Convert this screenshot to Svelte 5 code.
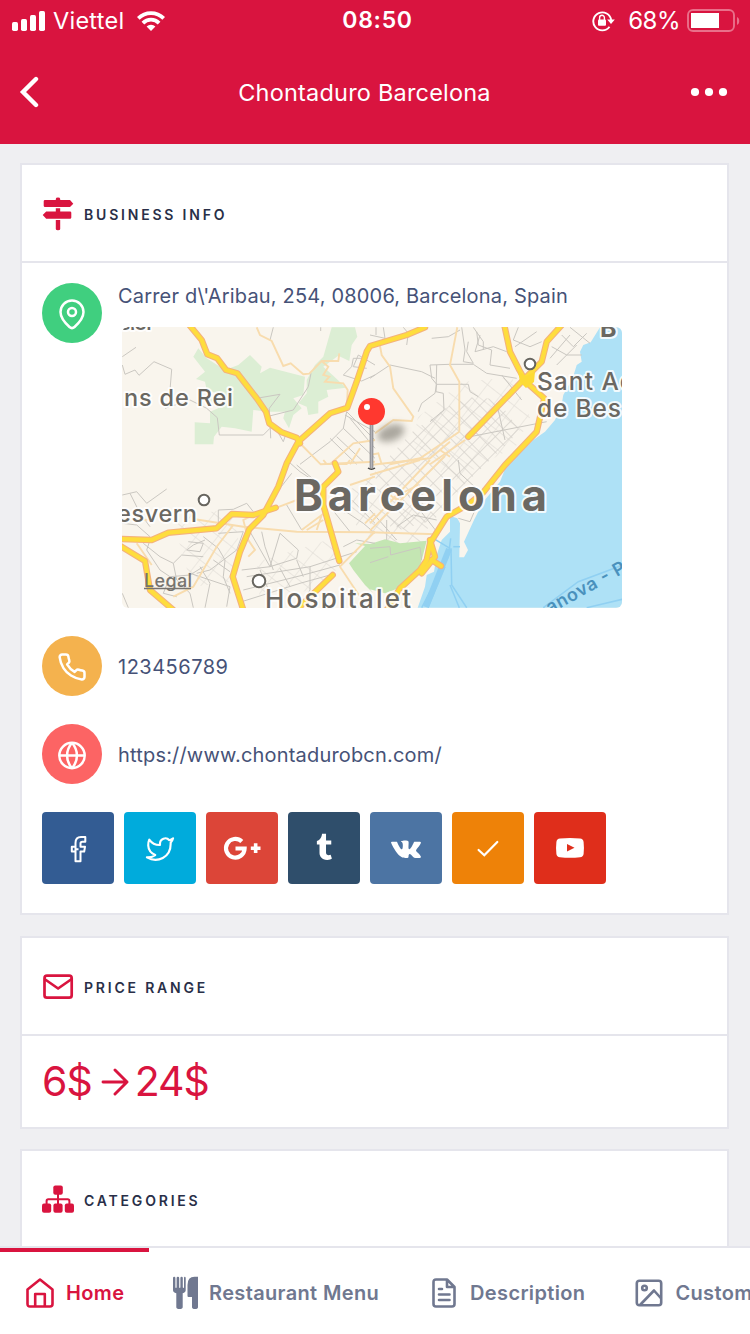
<script>
  // Map geometry is kept in four 3x tiles; each tile is projected to map pixels.
  const tiles = { a: [-12, -12], b: [248, -12], c: [-12, 133], d: [248, 133] };
  const project = (src) =>
    src
      .split(';')
      .map((part) => {
        const [tile, ...pts] = part.trim().split(/\s+/);
        const [ox, oy] = tiles[tile];
        return pts
          .map((p) => {
            const [x, y] = p.split(',').map(Number);
            return (ox + x / 3).toFixed(1) + ',' + (oy + y / 3).toFixed(1);
          })
          .join(' ');
      })
      .join(' ');

  const water = project(
    'b 757,37 690,37 662,82 640,90 630,110 635,140 620,150 608,190 580,240 575,268 555,315 525,350 490,375 435,430 405,462;d 390,65 340,125 312,180 282,245 294,270 282,292 268,292 270,190 262,175 240,168 240,215 215,240 200,285 192,335 170,345 165,380 143,443 757,443'
  );
  const parks = [
    'a 265,100 290,130 345,165 385,150 420,120 455,155 450,175 480,158 585,185 580,240 550,250 575,280 550,300 537,340 520,310 525,290 470,290 430,285 425,350 375,340 335,335 312,365 310,388 254,388 254,322 300,325 300,290 325,280 310,265 290,250 320,235 290,225 285,200 258,192 285,170 250,125',
    'a 665,37 735,37 742,65 725,90 718,138 685,122 640,155 670,182 708,218 650,225 655,245 625,260 625,295 595,300 590,275 565,265 590,235 590,195 615,150 640,125'
  ].map(project);
  const hill = project('d -45,250 0,252 45,238 90,250 170,242 150,320 85,385 45,400 0,388;c 790,400 765,375 730,330 717,310 765,258');
  const harbour = ['d 242,235 235,290 155,443', 'd 243,265 245,375 290,443', 'd 195,238 240,265', 'd 225,320 175,440', 'd 240,375 268,443', 'd 250,260 270,260', 'd 520,443 625,365 757,316', 'd 650,443 757,418'].map(project);

  const streets = [
    'a 37,150 45,178 75,165 87,181 132,140 185,163 180,225',
    'a 37,125 78,97', 'a 165,280 240,255 290,280 322,308 328,360 460,360 480,340',
    'a 490,37 480,75', 'a 440,250 510,238 478,280 480,320 482,370', 'a 632,37 632,48',
    'a 603,175 595,215 550,285 470,305', 'a 500,345 520,380 530,350',
    'a 760,130 730,130 725,155 700,180 755,198 795,180', 'a 795,150 745,120 730,155 770,160',
    'a 710,290 700,340 660,380 570,448', 'a 705,300 795,350', 'a 710,290 795,375', 'a 720,310 795,400', 'a 660,370 740,448', 'a 680,365 760,440', 'a 700,340 795,430',
    'b 0,60 45,70 40,37', 'b 18,37 18,60', 'b 100,37 115,55 110,90', 'b 0,190 60,150 155,170 195,190', 'b 240,148 180,150 185,190 200,208 195,235 155,265 145,290', 'b 200,150 198,230 220,235 222,285 180,320',
    'b 200,208 295,208 300,230 325,245', 'b 275,37 285,105 280,140 310,145 290,110 295,80', 'b 185,70 235,65 270,45', 'b 320,50 325,90 365,105 360,150 420,160', 'b 330,60 315,110 370,95 410,110', 'b 240,148 310,148 350,175 440,190',
    'b 310,37 340,80 340,105', 'b 445,37 430,75 480,95 515,80', 'b 545,95 590,120 635,120', 'b 575,60 610,95 650,55', 'b 600,37 660,85', 'b 540,130 600,60', 'b 560,150 620,90', 'b 500,50 435,95', 'b 300,365 530,320', 'b 380,265 405,375', 'b 395,180 455,255',
    'c 37,105 80,95 110,130 170,87', 'c 37,190 80,195 120,230', 'c 60,100 90,160 120,200', 'c 325,205 325,150 370,148 410,130 430,155', 'c 100,250 150,290 190,310 215,285 280,290', 'c 120,240 110,270 150,330 180,350 240,345 280,320', 'c 190,310 200,360 240,400 250,443',
    'c 235,245 280,250 270,275 230,270 250,255 285,240', 'c 280,230 325,265 345,300 340,350 360,400', 'c 325,220 400,215 380,270 300,330 260,340', 'c 180,350 160,400 200,410', 'c 240,340 360,380 350,440', 'c 270,320 300,370 285,443', 'c 310,300 360,335',
    'c 420,215 480,320 510,220 565,270 560,295 480,320 395,330', 'c 455,215 465,260 490,330', 'c 410,350 600,320 740,275', 'c 400,390 580,345 690,315', 'c 395,425 570,370 660,345', 'c 600,320 600,390 570,440', 'c 450,330 480,400', 'c 510,325 540,380', 'c 560,300 580,350', 'c 530,135 575,210', 'c 530,0 570,35 640,80', 'c 545,40 510,85', 'c 560,15 630,75', 'c 700,260 740,240 795,250', 'c 700,150 760,190 795,220', 'c 660,140 720,215', 'c 37,400 55,443', 'c 725,120 795,190',
    'd 0,265 60,260 62,285 150,262', 'd 0,308 55,290', 'd 150,262 155,300', 'd 50,180 50,240', 'd 0,150 80,240', 'd 265,0 270,40 330,95', 'd 265,175 300,185 315,150', 'd 110,100 200,215', 'd 80,200 130,165 200,180'
  ].map(project);
  const minor = [
    'a 440,37 450,60 485,78 520,153 542,145 580,178 598,176 635,138 685,138 688,115',
    'a 635,138 655,155 640,180 658,185 645,200 700,205 713,225 710,280',
    'a 575,390 632,448 795,440', 'a 660,448 730,385 795,375', 'a 720,448 750,400',
    'b 30,93 35,120 60,155 70,220 130,305 125,318 70,315 15,355', 'b 262,37 240,150 268,200 268,350', 'b 285,375 180,448', 'b 268,350 150,430 60,448', 'b 240,380 180,430 0,450', 'b 210,405 240,425', 'b 0,420 25,415 35,448',
    'c 255,178 400,200 560,215 795,217', 'c 37,178 130,180', 'c 500,143 600,105 640,95', 'c 370,195 320,260 250,380 190,410', 'c 795,215 690,320 760,425', 'c 430,165 400,180 415,240 435,270 415,290', 'c 575,210 635,165 620,210', 'c 765,190 795,160', 'c 80,250 125,315', 'c 640,0 650,12 710,12 720,0', 'c 720,75 795,50', 'c 590,210 640,180',
    'd 0,217 200,223', 'd 0,45 150,0', 'd 0,190 180,0', 'd 0,212 225,-12', 'd 60,105 100,135 75,110 145,75'
  ].map(project);
  const major = [
    'a 238,30 275,75 292,118 322,130 348,165 382,175 405,205 440,250 468,290 478,325 515,352 560,368 570,385',
    'b 165,37 110,60 50,78 0,93;a 770,110 740,200 712,278 660,295 565,380 530,445;c 505,80 460,165 418,208 390,275 368,350 400,450',
    'c 30,237 125,240 175,218 320,205 365,162 430,165 497,143',
    'c 30,257 105,303 120,390 190,450',
    'c 675,10 685,35 640,80 640,135 688,303',
    'c 668,345 590,420 560,450',
    'b 403,30 420,110 448,165 465,195', 'b 575,30 530,80 515,140 465,190', 'b 465,190 295,365',
    'b 465,198 523,250 500,350 405,450;d 340,97 300,130 230,170 180,250 170,300 150,330 90,385 50,450',
    'd 180,240 195,290 155,340', 'd 185,300 213,318'
  ].map(project);

  const socials = [
    { name: 'facebook', color: '#335c93' },
    { name: 'twitter', color: '#00abdc' },
    { name: 'google', color: '#dc4538' },
    { name: 'tumblr', color: '#2f4e6b' },
    { name: 'vk', color: '#4c74a3' },
    { name: 'check', color: '#ee8208' },
    { name: 'youtube', color: '#df2e1b' }
  ];
</script>

<div class="screen">
  <header>
    <div class="status">
      <div class="carrier">
        <svg width="34" height="20" viewBox="0 0 34 20" fill="#fff"><rect y="11" width="6" height="9" rx="1.7"/><rect x="9" y="8" width="6" height="12" rx="1.7"/><rect x="18" y="4" width="6" height="16" rx="1.7"/><rect x="27" width="6" height="20" rx="1.7"/></svg>
        <span class="operator">Viettel</span>
        <svg width="28" height="20" viewBox="0 0 28 20" fill="none" stroke="#fff" stroke-width="3.800"><path d="M1.300 7.400a18 18 0 0 1 25.400 0M5.900 12.100a11.400 11.400 0 0 1 16.200 0"/><path d="M14 20l-4.400-4.400a6.300 6.300 0 0 1 8.800 0z" fill="#fff" stroke="none"/></svg>
      </div>
      <div class="clock">08:50</div>
      <div class="power">
        <svg width="23" height="22" viewBox="0 0 23 22" fill="none" stroke="#fff" stroke-width="1.900"><path d="M17.500 16.800A9 9 0 1 1 19.200 10"/><path d="M15.200 9.500h7.600L19 14z" fill="#fff" stroke="none"/><rect x="6" y="9.500" width="8" height="6.200" rx="1" fill="#fff" stroke="none"/><path d="M7.600 10V7.700a2.400 2.400 0 0 1 4.800 0V10" stroke-width="1.400"/></svg>
        <span class="percent">68%</span>
        <svg width="54" height="24" viewBox="0 0 54 24"><rect x="1" y="1" width="46" height="21" rx="5" fill="none" stroke="#e9708a" stroke-width="1.900"/><rect x="4" y="4" width="28" height="15" fill="#fff"/><path d="M50 8c3 1.200 3 6.800 0 8z" fill="#e9708a"/></svg>
      </div>
    </div>
    <div class="titlebar">
      <svg width="20" height="32" viewBox="0 0 20 32" fill="none" stroke="#fff" stroke-width="4.400" stroke-linecap="round" stroke-linejoin="miter"><path d="M17 3L4 16l13 13"/></svg>
      <h1>Chontaduro Barcelona</h1>
      <svg width="38" height="10" viewBox="0 0 38 10" fill="#fff"><circle cx="5" cy="5" r="4.100"/><circle cx="19" cy="5" r="4.100"/><circle cx="33" cy="5" r="4.100"/></svg>
    </div>
  </header>

  <main>
    <section class="info">
      <div class="head">
        <svg width="32" height="34" viewBox="0 0 32 34" fill="#d9143f"><path d="M13.800 2q0-1.400 2.200-1.400T18.200 2v1H28l3.300 3.700L28 10H3q-1.300 0-1.300-1.300V4.300Q1.700 3 3 3h10.800zM13.800 11.200h4.400v3.300H28q1.300 0 1.300 1.300v4.600q0 1.300-1.300 1.300H4.200L.7 18l3.500-3.500h9.600zM13.800 22.900h4.400v9q0 1.300-2.200 1.300t-2.200-1.300z"/></svg>
        <h2>BUSINESS INFO</h2>
      </div>
      <div class="body">
        <div class="row address">
          <div class="dot green"><svg width="30" height="32" viewBox="0 0 30 32" fill="none" stroke="#fff" stroke-width="2.500"><path d="M15 2.500A11.500 11.500 0 0 0 3.500 14c0 5 3.500 10 9 15q2.500 2.200 5 0c5.500-5 9-10 9-15A11.500 11.500 0 0 0 15 2.500z"/><circle cx="15" cy="14" r="4"/></svg></div>
          <div class="place">
            <p>Carrer d\'Aribau, 254, 08006, Barcelona, Spain</p>
            <svg class="map" width="500" height="281" viewBox="0 0 500 281">
              <defs>
                <pattern id="blocks" width="11" height="11" patternUnits="userSpaceOnUse" patternTransform="rotate(45)"><path d="M0 0H11M0 0V11" stroke="#cbc8c2" stroke-width="1.500" fill="none"/></pattern>
                <pattern id="wide" width="17" height="15" patternUnits="userSpaceOnUse" patternTransform="rotate(38)"><path d="M0 0H17M0 0V15" stroke="#cfccc6" stroke-width="1.300" fill="none"/></pattern>
                <linearGradient id="pole"><stop stop-color="#808085"/><stop offset=".5" stop-color="#b5b5ba"/><stop offset="1" stop-color="#808085"/></linearGradient>
                <filter id="soft" x="-50%" y="-50%" width="200%" height="200%"><feGaussianBlur stdDeviation="3.500"/></filter>
              </defs>
              <rect width="500" height="281" fill="#f9f5ed"/>
              <polygon points={water} fill="#aee1f6"/>
              {#each parks as pts}<polygon points={pts} fill="#dceed4"/>{/each}
              <polygon points="252,146 290,105 340,70 375,72 398,104 340,160 312,193 270,205" fill="url(#blocks)" opacity=".75"/>
              <polygon points="296,90 340,55 390,50 408,90 395,118 330,155 290,120" fill="url(#wide)" opacity=".5"/>
              <polygon points="210,175 250,148 310,180 300,232 262,225" fill="url(#wide)" opacity=".7"/>
              <polygon points="50,190 110,182 118,220 108,255 70,260" fill="url(#wide)" opacity=".5"/>
              <polygon points="135,235 215,210 218,240 190,262 138,278" fill="url(#wide)" opacity=".5"/>
              <polygon points={hill} fill="#c4e6b3"/>
              <g fill="none" stroke="#cac7c1" stroke-width="1">{#each streets as pts}<polyline points={pts}/>{/each}</g>
              <g fill="none" stroke="#f8dcae" stroke-width="1.900">{#each minor as pts}<polyline points={pts}/>{/each}</g>
              <g fill="none" stroke="#90d0f2" stroke-width="1.500">{#each harbour as pts}<polyline points={pts}/>{/each}<path d="M327 222L304 280" stroke-width="6"/></g>
              <g fill="none" stroke="#f4b27c" stroke-width="6.400" stroke-linecap="round" stroke-linejoin="round">{#each major as pts}<polyline points={pts}/>{/each}</g>
              <g fill="none" stroke="#fedd3d" stroke-width="4.300" stroke-linecap="round" stroke-linejoin="round">{#each major as pts}<polyline points={pts}/>{/each}</g>
              <path d="M396 44l8 5 9-4-1 10-8 6-6-6z" fill="#fddb35"/>
              <g fill="#fff" stroke="#686660" stroke-width="2"><circle cx="408" cy="37" r="5.300"/><circle cx="82" cy="173" r="5.300"/><circle cx="137" cy="254" r="6.300"/></g>
              <g class="labels">
                <text x="-3" y="3.300" font-size="23" textLength="36">slor</text>
                <text x="2" y="79" font-size="23.500" textLength="109">ns de Rei</text>
                <text x="478" y="10" font-size="25" style="font-weight:700">B</text>
                <text x="415" y="63" font-size="24.500" textLength="98">Sant Ad</text>
                <text x="415" y="89.500" font-size="24.500" textLength="84">de Bes</text>
                <text x="-5" y="194.500" font-size="23.500" textLength="80">esvern</text>
                <text x="143" y="280.500" font-size="26" textLength="146">Hospitalet</text>
                <text class="city" x="172" y="184" font-size="43.500" textLength="253">Barcelona</text>
              </g>
              <text class="sea" x="428" y="287" transform="rotate(-29 428 287)" textLength="88">anova - P</text>
              <text class="legal" x="22" y="260" textLength="48">Legal</text>
              <path d="M22 261.500H69" stroke="#77746f" stroke-width="1.700"/>
              <ellipse cx="269" cy="106" rx="14" ry="8" transform="rotate(-20 269 106)" fill="#77736a" opacity=".6" filter="url(#soft)"/>
              <path d="M246 141q3.500 2.500 7 0" stroke="#444" stroke-width="1.500" fill="none"/>
              <rect x="247.700" y="95" width="3.600" height="46" fill="url(#pole)"/>
              <circle cx="249.500" cy="84.500" r="13.500" fill="#ff382f"/><circle cx="245" cy="80" r="3" fill="#fff"/>
            </svg>
          </div>
        </div>
        <div class="row">
          <div class="dot amber"><svg width="30" height="30" viewBox="0 0 24 24" fill="none" stroke="#fff" stroke-width="2" stroke-linejoin="round"><path d="M22 16.920v3a2 2 0 0 1-2.180 2 19.790 19.790 0 0 1-8.630-3.070 19.500 19.500 0 0 1-6-6 19.790 19.790 0 0 1-3.070-8.670A2 2 0 0 1 4.110 2h3a2 2 0 0 1 2 1.720 12.840 12.840 0 0 0 .7 2.810 2 2 0 0 1-.45 2.110L8.090 9.910a16 16 0 0 0 6 6l1.270-1.270a2 2 0 0 1 2.110-.45 12.840 12.840 0 0 0 2.810.7A2 2 0 0 1 22 16.920z"/></svg></div>
          <p class="phone">123456789</p>
        </div>
        <div class="row">
          <div class="dot coral"><svg width="30" height="30" viewBox="0 0 30 30" fill="none" stroke="#fff" stroke-width="2.500"><circle cx="15" cy="15.500" r="12.700"/><path d="M2.300 15.500h25.400M15 2.800c6.600 7.800 6.600 17.600 0 25.400M15 2.800c-6.600 7.800-6.600 17.600 0 25.400"/></svg></div>
          <p>https://www.chontadurobcn.com/</p>
        </div>
        <div class="socials">
          {#each socials as s}
            <div class="social" style="background:{s.color}">
              <svg width="72" height="72" viewBox="0 0 72 72">
                {#if s.name === 'facebook'}
                  <path d="M43.300 25h-4.300q-5.500 0-5.500 6v3.800H29.800v4.700h3.700v9.700h5v-9.700h3.700l.8-4.700h-4.500v-3.300q0-1.700 1.900-1.700h2.900zM33.500 34.800v5M33.500 37.200h3" fill="none" stroke="#fff" stroke-width="2" stroke-linejoin="round"/>
                {:else if s.name === 'twitter'}
                  <path transform="translate(21.700 22.800) scale(1.190)" d="M23 3a10.900 10.900 0 0 1-3.140 1.530 4.480 4.480 0 0 0-7.860 3v1A10.660 10.660 0 0 1 3 4s-4 9 5 13a11.640 11.640 0 0 1-7 2c9 5 20 0 20-11.500a4.500 4.500 0 0 0-.08-.83A7.720 7.720 0 0 0 23 3z" fill="none" stroke="#fff" stroke-width="1.800" stroke-linejoin="round"/>
                {:else if s.name === 'google'}
                  <path d="M35.800 29.600A9.300 9.300 0 1 0 38.600 36.500H29.500" fill="none" stroke="#fff" stroke-width="4.200"/><path d="M44.800 36.200h9.700M49.650 31.300v9.800" fill="none" stroke="#fff" stroke-width="3.600"/>
                {:else if s.name === 'tumblr'}
                  <path transform="translate(23.300 21.800) scale(1.090)" d="M14.563 24c-5.093 0-7.031-3.756-7.031-6.411V9.747H5.116V6.648c3.630-1.313 4.512-4.596 4.710-6.469C9.840.051 9.941 0 9.999 0h3.517v6.114h4.801v3.633h-4.820v7.470c.016 1.001.375 2.371 2.207 2.371h.090c.631-.020 1.486-.205 1.936-.419l1.156 3.425c-.436.636-2.400 1.374-4.156 1.404h-.178z" fill="#fff"/>
                {:else if s.name === 'vk'}
                  <path transform="translate(21 22.200) scale(1.250)" d="M13.162 18.994c.609 0 .858-.406.851-.915-.031-1.917.714-2.949 2.059-1.604 1.488 1.488 1.796 2.519 3.603 2.519h3.200c.808 0 1.126-.260 1.126-.668 0-.863-1.421-2.386-2.625-3.504-1.686-1.565-1.765-1.602-.313-3.486 1.801-2.339 4.157-5.336 2.073-5.336h-3.981c-.772 0-.828.435-1.103 1.083-.995 2.347-2.886 5.387-3.604 4.922-.751-.485-.407-2.406-.350-5.261.015-.754.011-1.271-1.141-1.539-.629-.145-1.241-.205-1.809-.205-2.273 0-3.841.953-2.950 1.119 1.571.293 1.420 3.692 1.054 5.160-.638 2.556-3.036-2.024-4.035-4.305-.241-.548-.315-.974-1.175-.974h-3.255c-.492 0-.787.160-.787.516 0 .602 2.960 6.720 5.786 9.770 2.756 2.975 5.480 2.708 7.376 2.708z" fill="#fff"/>
                {:else if s.name === 'check'}
                  <path d="M26.600 38l5.700 5.300L45.300 30" fill="none" stroke="#fff" stroke-width="2.200" stroke-linecap="round"/>
                {:else}
                  <path d="M26 26.500q10-1 20 0 3.200.3 3.600 3.500.7 6 0 12-.4 3-3.600 3.300-10 1-20 0-3.200-.3-3.600-3.300-.7-6 0-12 .400-3.200 3.600-3.500z" fill="#fff"/><path d="M33 32v7.600l7.500-3.800z" fill="#df2e1b"/>
                {/if}
              </svg>
            </div>
          {/each}
        </div>
      </div>
    </section>

    <section class="price">
      <div class="head">
        <svg width="32" height="34" viewBox="0 0 32 34" fill="none" stroke="#d9143f" stroke-width="2.700" stroke-linejoin="round"><rect x="2.500" y="5.700" width="27.200" height="22" rx="2.500"/><path d="M2.500 9l13.600 9.500L29.700 9"/></svg>
        <h2>PRICE RANGE</h2>
      </div>
      <div class="range">
        <span>6$</span>
        <svg width="28" height="28" viewBox="0 0 28 28" fill="none" stroke="#d9143f" stroke-width="2.900" stroke-linecap="round" stroke-linejoin="round"><path d="M2 14h24M14 2l12 12-12 12"/></svg>
        <span>24$</span>
      </div>
    </section>

    <section>
      <div class="head">
        <svg width="32" height="34" viewBox="0 0 32 34" fill="#d9143f"><rect x="11.300" y="2.500" width="9.500" height="9.200" rx="2"/><rect y="20.500" width="9.200" height="9.200" rx="2"/><rect x="11.400" y="20.500" width="9.200" height="9.200" rx="2"/><rect x="22.800" y="20.500" width="9.200" height="9.200" rx="2"/><path d="M16 11v10M4.600 21v-3q0-1.700 1.700-1.700h19.400q1.700 0 1.700 1.700v3" fill="none" stroke="#d9143f" stroke-width="2"/></svg>
        <h2>CATEGORIES</h2>
      </div>
    </section>
  </main>

  <nav>
    <div class="tab active">
      <svg width="28" height="32" viewBox="0 0 28 32" fill="none" stroke="currentColor" stroke-width="2.600" stroke-linejoin="round"><path d="M1.500 12.500L14 2.500l12.500 10v14.500q0 2.500-2.500 2.500H4q-2.500 0-2.500-2.500zM9.200 29.500V17h9.600v12.500"/></svg>
      <span>Home</span>
    </div>
    <div class="tab">
      <svg width="26" height="34" viewBox="0 0 26 34" fill="currentColor"><path d="M0 2q0-1.200 1.200-1.200T2.400 2v9q0 1 .6 1t.6-1V2q0-1.200 1.300-1.200T6.200 2v9q0 1 .6 1t.6-1V2q0-1.200 1.200-1.200T9.800 2v9q0 1 .6 1t.6-1V2q0-1.200.8-1.200t.9 1.200v12q0 2.500-3 3.300V31q0 2-3.200 2t-3.200-2V17.300Q0 16.500 0 14zM25 .8V31q0 2-3 2t-3-2V21h-3.500q-1 0-1-1V9Q14.500.8 21.500.8z"/></svg>
      <span>Restaurant Menu</span>
    </div>
    <div class="tab description">
      <svg width="24" height="32" viewBox="0 0 24 32" fill="none" stroke="currentColor" stroke-width="2.600" stroke-linejoin="round"><path d="M15 2.500H4Q1.500 2.500 1.500 5v22Q1.500 29.500 4 29.500h16q2.500 0 2.500-2.500V10zM15 2.500V10h7.500"/><path d="M7 12h3M7 17.500h10.500M7 23h10.500" stroke-linecap="round"/></svg>
      <span>Description</span>
    </div>
    <div class="tab custom">
      <svg width="28" height="32" viewBox="0 0 28 32" fill="none" stroke="currentColor" stroke-width="2.600" stroke-linejoin="round"><rect x="1.800" y="3.800" width="24.400" height="24.500" rx="2.500"/><circle cx="9.500" cy="11" r="2.300"/><path d="M5 28l14-14.500 7.200 8"/></svg>
      <span>Custom</span>
    </div>
  </nav>
</div>

<style>
  :global(body) { margin: 0; overflow: hidden; }
  * { box-sizing: border-box; }
  svg { display: block; flex: none; }
  h1, h2, p { margin: 0; font-weight: 400; }
  .screen { width: 750px; height: 1334px; display: flex; flex-direction: column; overflow: hidden; background: #efeff2; font-family: Inter, "Liberation Sans", sans-serif; }
  header { height: 144px; flex: none; background: #d9143f; color: #fff; }
  .status { height: 41px; display: grid; grid-template-columns: 1fr auto 1fr; align-items: center; padding: 0 9px 0 12px; }
  .carrier, .power { display: flex; align-items: center; white-space: nowrap; }
  .operator { font-size: 23.500px; letter-spacing: .25px; width: 84px; padding-left: 7px; line-height: 41px; margin-right: 7px; }
  .clock { font-size: 23px; font-weight: 600; letter-spacing: .7px; line-height: 41px; padding-left: 2px; }
  .power { justify-content: flex-end; }
  .percent { font-size: 24px; line-height: 41px; margin: 0 7px 0 13px; letter-spacing: -.5px; }
  .titlebar { height: 102px; display: flex; align-items: center; justify-content: space-between; padding: 0 22px 0 19px; }
  h1 { font-size: 23.500px; letter-spacing: .2px; }
  main { flex: 1; min-height: 0; overflow: hidden; padding: 19px 21px 0 20px; display: flex; flex-direction: column; gap: 20px; }
  section { flex: none; border: 2px solid #e5e5ec; background: #fff; }
  .info { height: 752px; margin-bottom: 1px; }
  .price { height: 193px; }
  .head { height: 98px; border-bottom: 2px solid #e5e5ec; display: flex; align-items: center; gap: 10px; padding: 1px 0 0 20px; }
  h2 { font-size: 14px; font-weight: 600; letter-spacing: 2.800px; color: #292f48; padding-top: 1px; }
  .body { padding: 20px; display: flex; flex-direction: column; gap: 28px; }
  .row { display: flex; align-items: center; gap: 16px; height: 60px; flex: none; }
  .row p { font-size: 20px; letter-spacing: .18px; color: #465277; white-space: nowrap; padding-top: 2px; }
  .row .phone { letter-spacing: .5px; }
  .row.address { height: 325px; align-items: flex-start; }
  .place p { line-height: 24px; height: 44px; padding-top: 1px; }
  .map { margin-left: 4px; border-radius: 6px; overflow: hidden; }
  .dot { width: 60px; height: 60px; border-radius: 50%; display: grid; place-items: center; flex: none; padding-top: 2px; }
  .green { background: #40cf7f; }
  .amber { background: #f4b24e; }
  .coral { background: #fc6464; }
  .socials { display: flex; gap: 10px; }
  .social { width: 72px; height: 72px; border-radius: 4px; }
  .range { height: 91px; display: flex; align-items: center; padding: 0 0 2px 20px; color: #d9143f; font-size: 41px; letter-spacing: -1px; }
  .range svg { margin: 2px 6px 0 9px; }
  .labels text { fill: #6b6862; stroke: #fff; stroke-opacity: .85; stroke-width: 4px; paint-order: stroke; stroke-linejoin: round; font-weight: 500; }
  .labels .city { font-weight: 650; }
  .sea { fill: #4a91bd; font-size: 18px; font-weight: 600; }
  .legal { fill: #77746f; font-size: 18px; font-weight: 500; }
  nav { height: 88px; flex: none; display: flex; border-top: 2px solid #e5e5ec; background: #fff; color: #707890; }
  .tab { flex: none; display: flex; align-items: center; gap: 10px; padding: 0 24px; border-top: 4px solid transparent; font-size: 20px; font-weight: 600; letter-spacing: .35px; white-space: nowrap; }
  .tab.active { width: 149px; border-color: #d9143f; color: #d9143f; gap: 12px; padding-left: 26px; }
  .tab.description { padding-left: 29px; gap: 14px; }
  .tab.custom { padding-left: 26px; gap: 12px; }
</style>
